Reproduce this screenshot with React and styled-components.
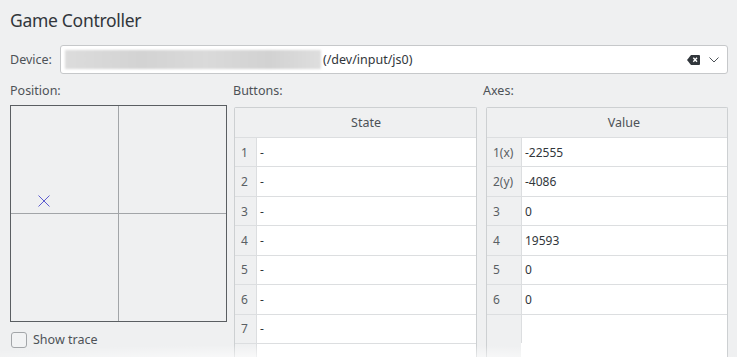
import React from 'react';
import styled, { createGlobalStyle } from 'styled-components';

const GlobalStyle = createGlobalStyle`
  html, body {
    margin: 0;
    padding: 0;
    background: #eff0f1;
    font-family: "Noto Sans", "Open Sans", sans-serif;
    color: #31363b;
  }
`;

const Page = styled.div`
  position: relative;
  width: 737px;
  height: 357px;
  overflow: hidden;
  padding: 0 9px 0 10px;
  box-sizing: border-box;
`;

const Title = styled.h1`
  margin: 0;
  padding-top: 7px;
  height: 45px;
  box-sizing: border-box;
  font-size: 17.5px;
  letter-spacing: -0.3px;
  font-weight: 400;
  line-height: 26px;
  color: #31363b;
`;

const DeviceRow = styled.div`
  display: flex;
  align-items: center;
  gap: 8px;
  height: 29px;
`;

const Label = styled.span`
  font-size: 12.5px;
  color: #4d5257;
`;

const Combo = styled.div`
  flex: 1;
  height: 29px;
  box-sizing: border-box;
  display: flex;
  align-items: center;
  background: #fff;
  border: 1px solid #c6c8ca;
  border-radius: 3px;
  padding: 0 8px 0 4px;
`;

const Blurred = styled.div`
  width: 256px;
  height: 19px;
  background: linear-gradient(90deg, #dcdcdc 0%, #d3d3d3 30%, #dadada 55%, #d2d2d2 80%, #dedede 100%);
  filter: blur(1px);
`;

const ComboText = styled.span`
  flex: 1;
  margin-left: 2px;
  font-size: 12.5px;
  color: #31363b;
`;

const ComboIcons = styled.div`
  display: flex;
  align-items: center;
  gap: 9px;
`;

const Columns = styled.div`
  display: flex;
  margin-top: 8px;
`;

const Column = styled.div`
  display: flex;
  flex-direction: column;
  width: ${({ $w }) => $w}px;
  margin-left: ${({ $ml }) => $ml || 0}px;
`;

const ColLabel = styled(Label)`
  height: 18px;
  line-height: 18px;
  margin-left: ${({ $ml }) => $ml || 0}px;
  margin-bottom: ${({ $mb }) => $mb}px;
`;

const PositionBox = styled.div`
  position: relative;
  width: 217px;
  height: 217px;
  box-sizing: border-box;
  border: 1px solid #5a5e62;
  display: grid;
  grid-template-columns: 1fr 1fr;
  grid-template-rows: 1fr 1fr;
`;

const Quadrant = styled.div`
  border-right: ${({ $r }) => ($r ? '1px solid #a2a5a8' : 'none')};
  border-bottom: ${({ $b }) => ($b ? '1px solid #a2a5a8' : 'none')};
`;

const Marker = styled.svg`
  position: absolute;
  left: 27px;
  top: 89px;
`;

const CheckRow = styled.label`
  display: flex;
  align-items: center;
  gap: 6px;
  margin-top: 9px;
  margin-left: 1px;
  font-size: 12.5px;
  color: #4d5257;
`;

const CheckBox = styled.span`
  width: 16px;
  height: 16px;
  box-sizing: border-box;
  border: 1px solid #a3a6a9;
  border-radius: 3px;
  background: #f2f3f4;
`;

const Table = styled.div`
  height: 260px;
  box-sizing: border-box;
  border: 1px solid #cdd0d2;
  border-bottom: none;
  border-radius: 2px 2px 0 0;
  display: grid;
  grid-template-columns: ${({ $head }) => $head}px 1fr;
  grid-auto-rows: 29.43px;
  grid-template-rows: 29px;
  background: linear-gradient(90deg, #eff0f1 ${({ $head }) => $head}px, #fff ${({ $head }) => $head}px);
  font-size: 12px;
  color: #31363b;
`;

const HeaderCell = styled.div`
  grid-column: 1 / span 2;
  display: grid;
  grid-template-columns: ${({ $head }) => $head}px 1fr;
  background: #eff0f1;
  align-items: center;
  font-size: 12.5px;
  color: #4d5257;
  span:last-child {
    text-align: center;
  }
`;

const RowHead = styled.div`
  display: flex;
  align-items: center;
  padding-left: 6px;
  border-top: 1px solid #dcdee0;
  color: #5a5f64;
`;

const Cell = styled.div`
  display: flex;
  align-items: center;
  padding-left: 3px;
  border-top: 1px solid #dcdee0;
  border-left: 1px solid #dcdee0;
  background: #fff;
`;

const BottomGlow = styled.div`
  position: absolute;
  left: 0;
  right: 0;
  bottom: -18px;
  height: 34px;
  background: radial-gradient(ellipse 60% 50% at 45% 60%, rgba(255, 255, 255, 0.85), rgba(255, 255, 255, 0));
  pointer-events: none;
`;

const buttons = ['1', '2', '3', '4', '5', '6', '7', ''].map((n) => ({ n, v: n === '' ? '' : '-' }));
const axes = [
  { n: '1(x)', v: '-22555' },
  { n: '2(y)', v: '-4086' },
  { n: '3', v: '0' },
  { n: '4', v: '19593' },
  { n: '5', v: '0' },
  { n: '6', v: '0' },
  { n: '', v: '' },
];

const DataTable = ({ head, title, rows }) => (
  <Table $head={head}>
    <HeaderCell $head={head}>
      <span />
      <span>{title}</span>
    </HeaderCell>
    {rows.map((r, i) => (
      <React.Fragment key={i}>
        <RowHead>{r.n}</RowHead>
        <Cell>{r.v}</Cell>
      </React.Fragment>
    ))}
  </Table>
);

const BackspaceIcon = () => (
  <svg width="13" height="10" viewBox="0 0 13 10">
    <path d="M4 0 H12 a1 1 0 0 1 1 1 V9 a1 1 0 0 1 -1 1 H4 L0 5 Z" fill="#31363b" />
    <path d="M6.3 2.8 L10 6.8 M10 2.8 L6.3 6.8" stroke="#fff" strokeWidth="1.4" />
  </svg>
);

const ChevronIcon = () => (
  <svg width="10" height="6" viewBox="0 0 10 6">
    <path d="M0.5 0.5 L5 5 L9.5 0.5" fill="none" stroke="#4d5257" strokeWidth="1" />
  </svg>
);

export default function App() {
  return (
    <Page>
      <GlobalStyle />
      <Title>Game Controller</Title>
      <DeviceRow>
        <Label>Device:</Label>
        <Combo>
          <Blurred />
          <ComboText>(/dev/input/js0)</ComboText>
          <ComboIcons>
            <BackspaceIcon />
            <ChevronIcon />
          </ComboIcons>
        </Combo>
      </DeviceRow>
      <Columns>
        <Column $w={217}>
          <ColLabel $mb={5}>Position:</ColLabel>
          <PositionBox>
            <Quadrant $r $b />
            <Quadrant $b />
            <Quadrant $r />
            <Quadrant />
            <Marker width="12" height="12" viewBox="0 0 12 12">
              <path d="M0.5 0.5 L11.5 11.5 M11.5 0.5 L0.5 11.5" stroke="#5c5ccf" strokeWidth="1" />
            </Marker>
          </PositionBox>
          <CheckRow>
            <CheckBox />
            Show trace
          </CheckRow>
        </Column>
        <Column $w={243} $ml={7}>
          <ColLabel $mb={7} $ml={-1}>Buttons:</ColLabel>
          <DataTable head={21} title="State" rows={buttons} />
        </Column>
        <Column $w={242} $ml={9}>
          <ColLabel $mb={7} $ml={-3}>Axes:</ColLabel>
          <DataTable head={34} title="Value" rows={axes} />
        </Column>
      </Columns>
      <BottomGlow />
    </Page>
  );
}
